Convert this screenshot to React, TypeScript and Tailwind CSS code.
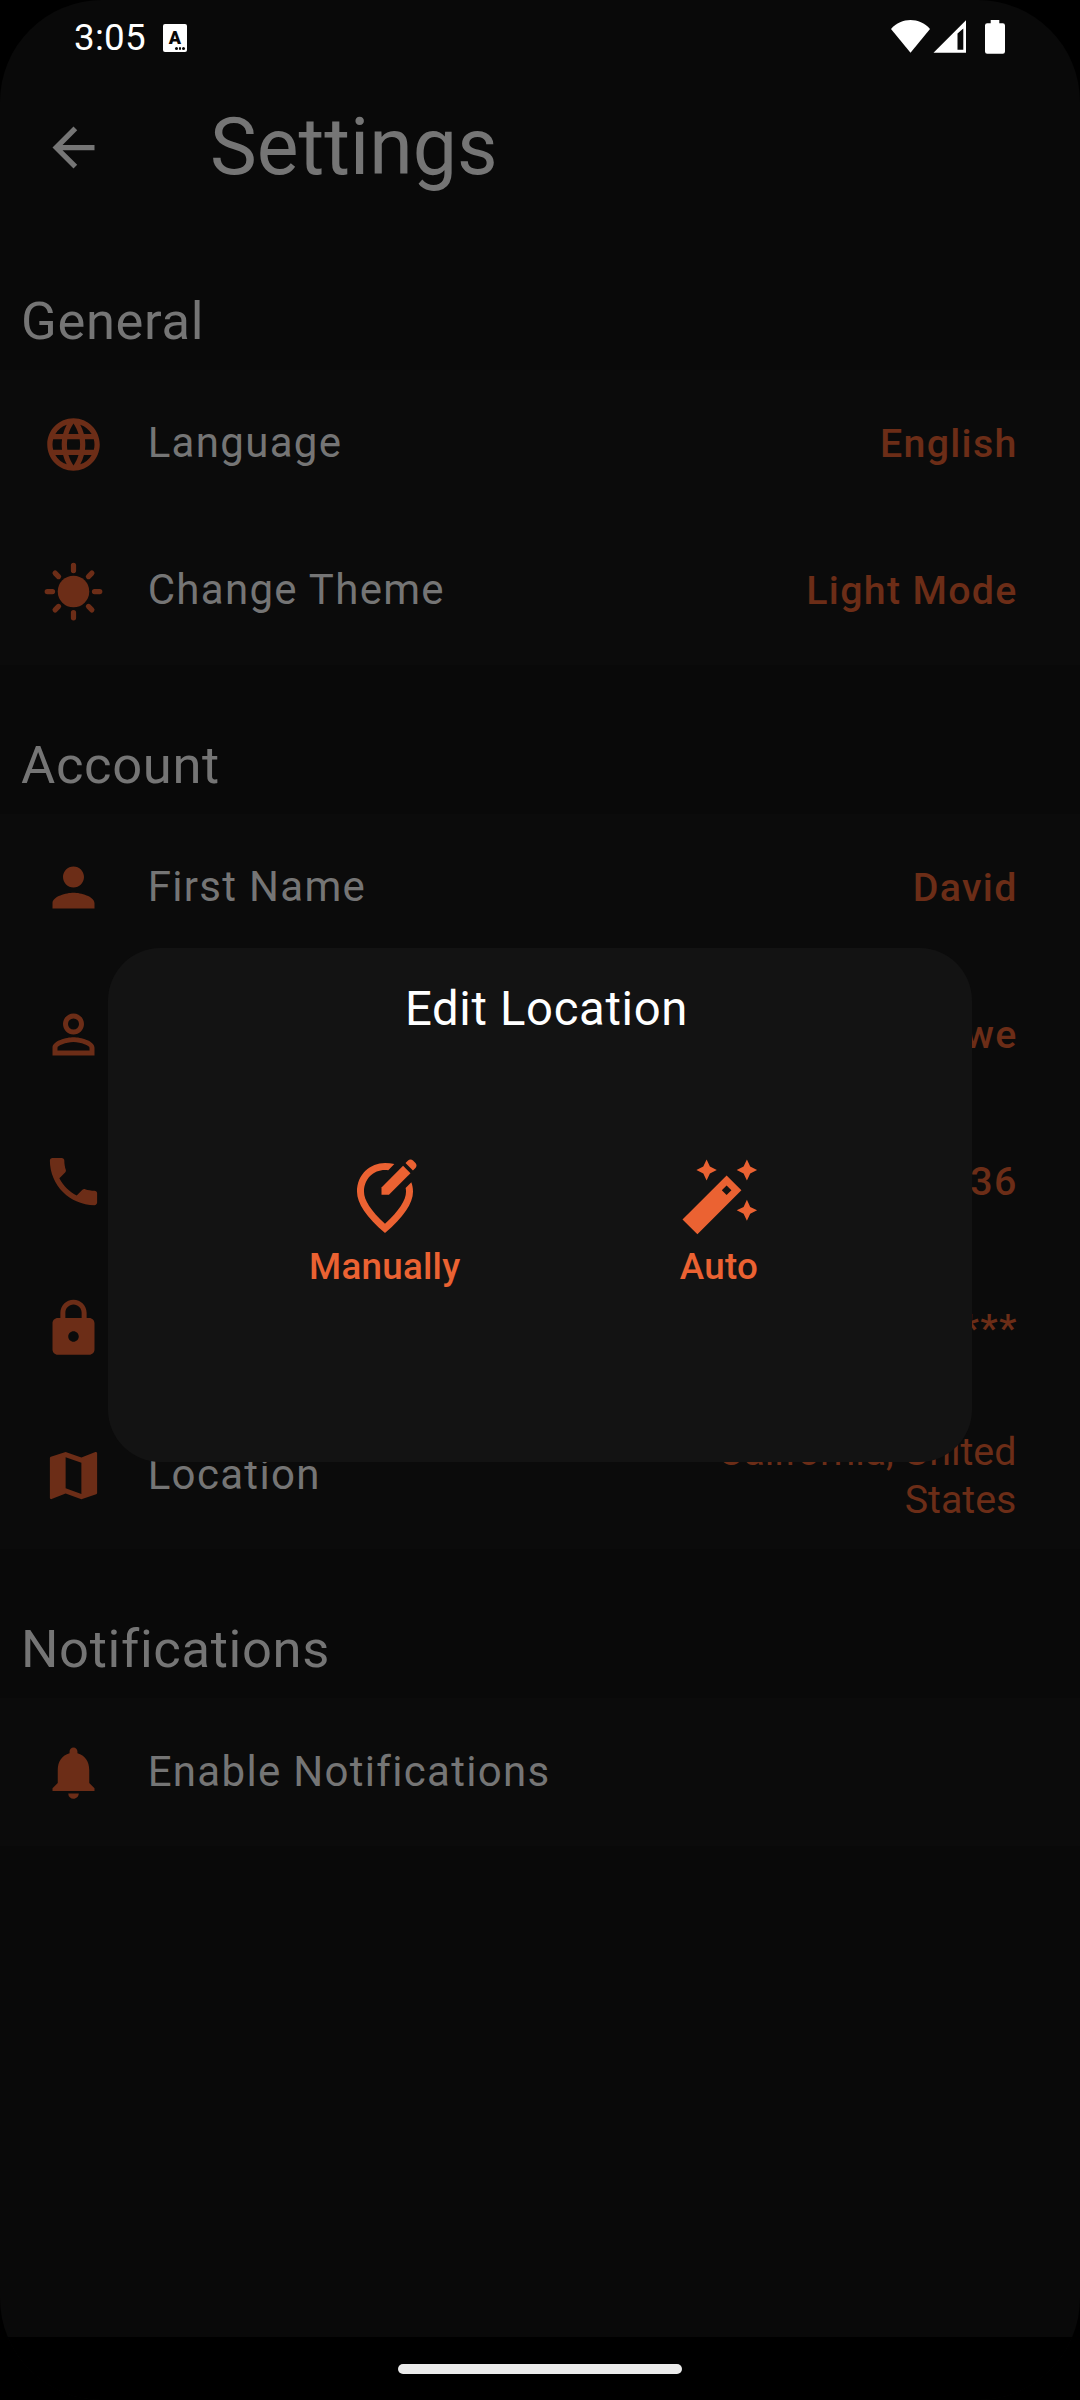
import type { ReactNode } from "react";
import {
  MdArrowBack,
  MdLanguage,
  MdLock,
  MdMap,
  MdNotifications,
  MdPerson,
  MdPersonOutline,
  MdPhone,
} from "react-icons/md";

type Item = { icon: ReactNode; label: string; value?: string; regular?: boolean };

function SunIcon() {
  return (
    <svg viewBox="0 0 24 24" className="size-[63px]" stroke="currentColor" strokeWidth="2" strokeLinecap="round">
      <circle cx="12" cy="12" r="6" fill="currentColor" stroke="none" />
      <path d="M12 2v2M12 20v2M2 12h2M20 12h2M5 5l1.3 1.3M17.7 17.7l1.3 1.3M5 19l1.3-1.3M17.7 6.3L19 5" />
    </svg>
  );
}

function EditPinIcon() {
  return (
    <svg viewBox="0 0 24 24" className="size-[84px]" fill="currentColor">
      <path d="M14.67 2.3 12.93 4.04C12.64 4.01 12.3 4 12 4c-3.35 0-6 2.57-6 6.2 0 2.34 1.95 5.44 6 9.14 4.05-3.7 6-6.79 6-9.14 0-.33-.03-.65-.08-.96l-.1-.01 1.7-1.7c.31.82.48 1.71.48 2.67 0 3.32-2.67 7.25-8 11.8-5.33-4.55-8-8.48-8-11.8C4 5.22 7.8 2 12 2c.92 0 1.83.1 2.67.3z" />
      <path d="M11 11.1h2.12l6.16-6.16-2.12-2.12L11 8.98z" />
      <path d="m20.71 2-.71-.71c-.39-.39-1.02-.39-1.41 0l-.73.73 2.12 2.12.73-.73c.39-.39.39-1.02 0-1.41z" />
    </svg>
  );
}

function WandIcon() {
  const star = "M0-10.5 3.3-3.4 10.2 0 3.3 3.4 0 10.5-3.3 3.4-10.2 0-3.3-3.4Z";
  return (
    <svg viewBox="0 0 84 84" className="size-[84px]" fill="currentColor">
      <path d={star} transform="translate(29.6 14)" />
      <path d={star} transform="translate(69.9 14)" />
      <path d={star} transform="translate(69.9 54.3)" />
      <path fillRule="evenodd" d="M49.6 19.6 64.4 34.3 20.4 78.3 5.5 63.5ZM49.6 29.5 44.8 34.3 49.6 39.1 54.4 34.3Z" />
    </svg>
  );
}

function StatusBar() {
  return (
    <div className="flex h-[74px] items-center justify-between pr-[75px] pl-[74px] text-white">
      <div className="flex items-center gap-[17px]">
        <span className="mt-[2px] text-[36.75px] leading-none tracking-[0.26px]">3:05</span>
        <span className="relative mt-[2px] flex h-[28px] w-[24px] justify-center rounded-[2px] bg-white">
          <span className="text-[18px] leading-[27px] font-black text-[#080808]">A</span>
          <span className="absolute right-[2px] bottom-[2px] flex gap-[1px]">
            <i className="size-[2.6px] rounded-full bg-[#080808]" />
            <i className="size-[2.6px] rounded-full bg-[#080808]" />
            <i className="size-[2.6px] rounded-full bg-[#080808]" />
          </span>
        </span>
      </div>
      <svg viewBox="0 0 114 34" className="h-[34px] w-[114px]" fill="#fff">
        <path d="M0 9C10.5-2.9 28.5-2.9 39 9L19.5 32.7Z" />
        <path fillRule="evenodd" d="M75 0.3V32.8H42.5ZM66.5 13.5V29.7H72.3V8.5Z" />
        <path d="M99.7 0h8.6v3.3h3.5a2.2 2.2 0 0 1 2.2 2.2v26a2.2 2.2 0 0 1-2.2 2.2H96.2a2.2 2.2 0 0 1-2.2-2.2v-26a2.2 2.2 0 0 1 2.2-2.2h3.5Z" />
      </svg>
    </div>
  );
}

function Row({ icon, label, value, regular }: Item) {
  return (
    <div className="flex h-[147px] items-center pr-[62.3px] pl-[42px]">
      <span className="w-[105.7px] text-[#6c2d17]">{icon}</span>
      <span className="-mt-[3px] flex-1 text-[42px] tracking-[1.31px] whitespace-nowrap text-[#757575]">{label}</span>
      {value && (
        <span
          className={
            regular
              ? "w-[330px] pr-[1.3px] text-right text-[39.375px] leading-[48px] text-[#6c2d17]"
              : "text-right text-[39.375px] font-medium tracking-[1.31px] text-[#6c2d17]"
          }
        >
          {value}
        </span>
      )}
    </div>
  );
}

function Section({ title, items, inset = "" }: { title: string; items: Item[]; inset?: string }) {
  return (
    <section>
      <h2 className="flex h-[98px] items-center pl-[21px] text-[52.5px] tracking-[0.66px] text-[#757575]">{title}</h2>
      <div className={`bg-[#0b0b0b] ${inset}`}>
        {items.map((item) => (
          <Row key={item.label} {...item} />
        ))}
      </div>
    </section>
  );
}

const general: Item[] = [
  { icon: <MdLanguage size={63} />, label: "Language", value: "English" },
  { icon: <SunIcon />, label: "Change Theme", value: "Light Mode" },
];

const account: Item[] = [
  { icon: <MdPerson size={63} />, label: "First Name", value: "David" },
  { icon: <MdPersonOutline size={63} />, label: "Last Name", value: "Lowe" },
  { icon: <MdPhone size={63} />, label: "Phone Number", value: "5550136" },
  { icon: <MdLock size={63} />, label: "Password", value: "********" },
  { icon: <MdMap size={63} />, label: "Location", value: "California, United States", regular: true },
];

const notifications: Item[] = [{ icon: <MdNotifications size={63} />, label: "Enable Notifications" }];

function LocationDialog() {
  return (
    <div className="absolute top-[948px] left-[108px] h-[514px] w-[864px] rounded-[52.5px] bg-[#131313]">
      <h3 className="pt-[31px] pl-[13px] text-center text-[47.25px] leading-[60px] tracking-[0.66px] text-white">
        Edit Location
      </h3>
      <div className="mt-[117px] flex gap-[216.5px] pl-[201px] text-[36.75px] leading-[43px] font-medium tracking-[0.26px] text-[#eb6232]">
        <button className="flex flex-col items-center gap-[5px]">
          <EditPinIcon />
          Manually
        </button>
        <button className="flex flex-col items-center gap-[5px]">
          <WandIcon />
          Auto
        </button>
      </div>
    </div>
  );
}

export default function App() {
  return (
    <div className="h-[2400px] w-[1080px] overflow-hidden bg-black font-[Roboto,sans-serif]">
      <div className="relative flex h-[2400px] flex-col overflow-hidden rounded-[102px] bg-[#090909]">
        <StatusBar />
        <header className="flex h-[147px] items-center pl-[42px]">
          <MdArrowBack size={63} color="#757575" />
          <h1 className="ml-[105px] text-[78.75px] leading-none text-[#757575]">Settings</h1>
        </header>
        <main className="flex flex-1 flex-col gap-[51px] pt-[51px]">
          <Section title="General" items={general} inset="py-[0.5px]" />
          <Section title="Account" items={account} />
          <Section title="Notifications" items={notifications} inset="pt-px" />
        </main>
        <footer className="flex h-[63px] justify-center bg-black pt-[27px]">
          <div className="h-[10px] w-[284px] rounded-full bg-[#ebebeb]" />
        </footer>
        <LocationDialog />
      </div>
    </div>
  );
}
